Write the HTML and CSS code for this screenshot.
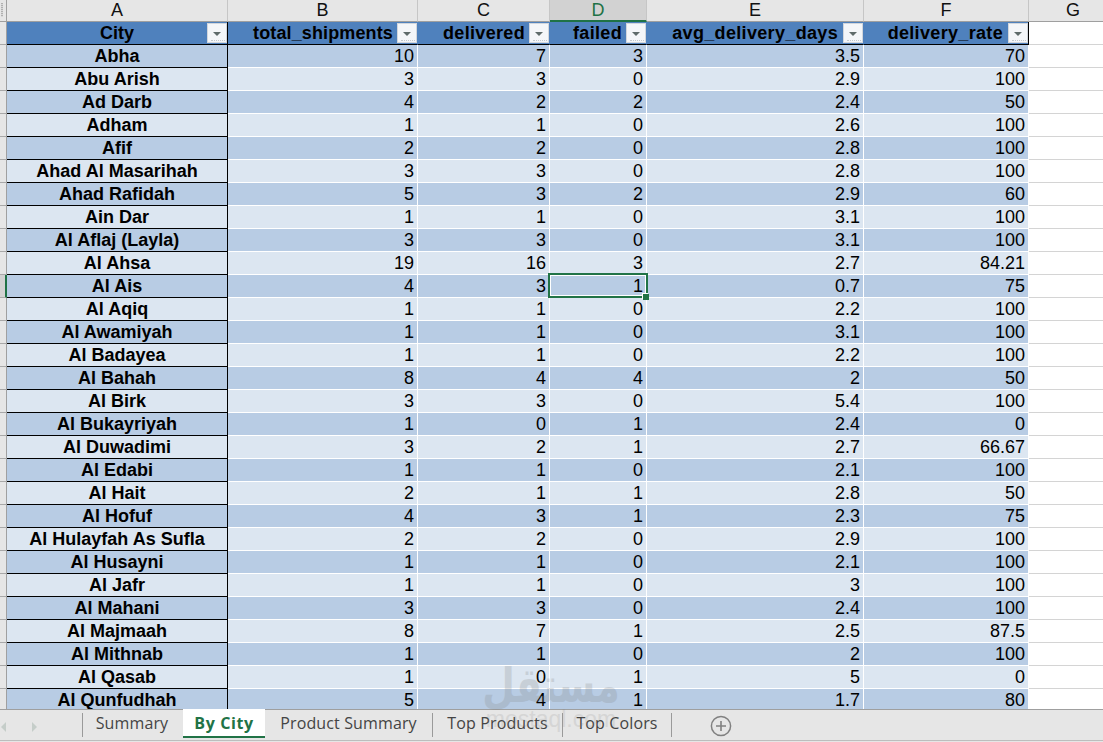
FILE: index.html
```html
<!DOCTYPE html>
<html lang="en">
<head>
<meta charset="utf-8">
<title>By City</title>
<link rel="stylesheet" href="styles.css">
</head>
<body>
<div class="app">
  <div class="sheet">
    <table class="grid">
      <colgroup><col class="w0"><col class="w1"><col class="w2"><col class="w3"><col class="w4"><col class="w5"><col class="w6"><col class="w7"></colgroup>
      <thead>
        <tr class="letters"><th class="corner"></th><th class="colh">A</th><th class="colh">B</th><th class="colh">C</th><th class="colh active">D</th><th class="colh">E</th><th class="colh">F</th><th class="colh">G</th></tr>
        <tr class="heads"><th class="rowh"></th>
          <th class="head cityh">City<span class="fbtn"></span></th>
          <th class="head tight">total_shipments<span class="fbtn"></span></th>
          <th class="head">delivered<span class="fbtn"></span></th>
          <th class="head">failed<span class="fbtn"></span></th>
          <th class="head wide">avg_delivery_days<span class="fbtn"></span></th>
          <th class="head wide end">delivery_rate<span class="fbtn"></span></th>
          <td class="blank"></td></tr>
      </thead>
      <tbody>
        <tr><th class="rowh"></th><td class="city">Abha</td><td>10</td><td>7</td><td>3</td><td>3.5</td><td>70</td><td class="blank"></td></tr>
        <tr><th class="rowh"></th><td class="city">Abu Arish</td><td>3</td><td>3</td><td>0</td><td>2.9</td><td>100</td><td class="blank"></td></tr>
        <tr><th class="rowh"></th><td class="city">Ad Darb</td><td>4</td><td>2</td><td>2</td><td>2.4</td><td>50</td><td class="blank"></td></tr>
        <tr><th class="rowh"></th><td class="city">Adham</td><td>1</td><td>1</td><td>0</td><td>2.6</td><td>100</td><td class="blank"></td></tr>
        <tr><th class="rowh"></th><td class="city">Afif</td><td>2</td><td>2</td><td>0</td><td>2.8</td><td>100</td><td class="blank"></td></tr>
        <tr><th class="rowh"></th><td class="city">Ahad Al Masarihah</td><td>3</td><td>3</td><td>0</td><td>2.8</td><td>100</td><td class="blank"></td></tr>
        <tr><th class="rowh"></th><td class="city">Ahad Rafidah</td><td>5</td><td>3</td><td>2</td><td>2.9</td><td>60</td><td class="blank"></td></tr>
        <tr><th class="rowh"></th><td class="city">Ain Dar</td><td>1</td><td>1</td><td>0</td><td>3.1</td><td>100</td><td class="blank"></td></tr>
        <tr><th class="rowh"></th><td class="city">Al Aflaj (Layla)</td><td>3</td><td>3</td><td>0</td><td>3.1</td><td>100</td><td class="blank"></td></tr>
        <tr><th class="rowh"></th><td class="city">Al Ahsa</td><td>19</td><td>16</td><td>3</td><td>2.7</td><td>84.21</td><td class="blank"></td></tr>
        <tr><th class="rowh active"></th><td class="city">Al Ais</td><td>4</td><td>3</td><td class="sel">1</td><td>0.7</td><td>75</td><td class="blank"></td></tr>
        <tr><th class="rowh"></th><td class="city">Al Aqiq</td><td>1</td><td>1</td><td>0</td><td>2.2</td><td>100</td><td class="blank"></td></tr>
        <tr><th class="rowh"></th><td class="city">Al Awamiyah</td><td>1</td><td>1</td><td>0</td><td>3.1</td><td>100</td><td class="blank"></td></tr>
        <tr><th class="rowh"></th><td class="city">Al Badayea</td><td>1</td><td>1</td><td>0</td><td>2.2</td><td>100</td><td class="blank"></td></tr>
        <tr><th class="rowh"></th><td class="city">Al Bahah</td><td>8</td><td>4</td><td>4</td><td>2</td><td>50</td><td class="blank"></td></tr>
        <tr><th class="rowh"></th><td class="city">Al Birk</td><td>3</td><td>3</td><td>0</td><td>5.4</td><td>100</td><td class="blank"></td></tr>
        <tr><th class="rowh"></th><td class="city">Al Bukayriyah</td><td>1</td><td>0</td><td>1</td><td>2.4</td><td>0</td><td class="blank"></td></tr>
        <tr><th class="rowh"></th><td class="city">Al Duwadimi</td><td>3</td><td>2</td><td>1</td><td>2.7</td><td>66.67</td><td class="blank"></td></tr>
        <tr><th class="rowh"></th><td class="city">Al Edabi</td><td>1</td><td>1</td><td>0</td><td>2.1</td><td>100</td><td class="blank"></td></tr>
        <tr><th class="rowh"></th><td class="city">Al Hait</td><td>2</td><td>1</td><td>1</td><td>2.8</td><td>50</td><td class="blank"></td></tr>
        <tr><th class="rowh"></th><td class="city">Al Hofuf</td><td>4</td><td>3</td><td>1</td><td>2.3</td><td>75</td><td class="blank"></td></tr>
        <tr><th class="rowh"></th><td class="city">Al Hulayfah As Sufla</td><td>2</td><td>2</td><td>0</td><td>2.9</td><td>100</td><td class="blank"></td></tr>
        <tr><th class="rowh"></th><td class="city">Al Husayni</td><td>1</td><td>1</td><td>0</td><td>2.1</td><td>100</td><td class="blank"></td></tr>
        <tr><th class="rowh"></th><td class="city">Al Jafr</td><td>1</td><td>1</td><td>0</td><td>3</td><td>100</td><td class="blank"></td></tr>
        <tr><th class="rowh"></th><td class="city">Al Mahani</td><td>3</td><td>3</td><td>0</td><td>2.4</td><td>100</td><td class="blank"></td></tr>
        <tr><th class="rowh"></th><td class="city">Al Majmaah</td><td>8</td><td>7</td><td>1</td><td>2.5</td><td>87.5</td><td class="blank"></td></tr>
        <tr><th class="rowh"></th><td class="city">Al Mithnab</td><td>1</td><td>1</td><td>0</td><td>2</td><td>100</td><td class="blank"></td></tr>
        <tr><th class="rowh"></th><td class="city">Al Qasab</td><td>1</td><td>0</td><td>1</td><td>5</td><td>0</td><td class="blank"></td></tr>
        <tr><th class="rowh"></th><td class="city">Al Qunfudhah</td><td>5</td><td>4</td><td>1</td><td>1.7</td><td>80</td><td class="blank"></td></tr>
      </tbody>
    </table>
  </div>
  <div class="mark"><div class="mark-ar" dir="rtl">مستقل</div><div class="mark-en">mostaql.com</div></div>
  <div class="tabs">
    <span class="nav"><i class="tri left"></i><i class="tri right"></i></span>
    <span class="tab t1">Summary</span>
    <span class="tab on">By City</span>
    <span class="tab t3">Product Summary</span>
    <span class="tab t4">Top Products</span>
    <span class="tab t5">Top Colors</span>
    <svg class="plus" width="22" height="22" viewBox="0 0 22 22"><circle cx="11" cy="11" r="9.6" fill="none" stroke="#808080" stroke-width="1.5"/><path d="M6 11h10M11 6v10" stroke="#808080" stroke-width="1.6"/></svg>
  </div>
</div>
</body>
</html>
```
FILE: styles.css
```css
* { box-sizing: border-box; }
html, body { margin: 0; height: 100%; overflow: hidden; background: #fff; }
.app { position: relative; width: 1103px; height: 742px; display: flex; flex-direction: column; font-family: "Liberation Sans", Arial, sans-serif; overflow: hidden; }
.sheet { flex: 0 0 709px; overflow: hidden; }

.grid { table-layout: fixed; width: 1118px; border-collapse: separate; border-spacing: 0; font-size: 18px; color: #000; }
.w0 { width: 7px; } .w1 { width: 221px; } .w2 { width: 190px; } .w3 { width: 132px; } .w4 { width: 97px; } .w5 { width: 217px; } .w6 { width: 165px; } .w7 { width: 89px; }
.grid tr { height: 23px; }
.grid .letters { height: 21px; }
.grid th, .grid td { padding: 1px 3px 0 0; height: 23px; line-height: 20px; vertical-align: top; white-space: nowrap; overflow: visible; font-weight: 400; }

.grid .corner, .grid .colh { height: 21px; padding: 0; line-height: 20px; background: #e6e6e6; border-right: 1px solid #c6c6c6; border-bottom: 1px solid #9f9f9f; text-align: center; color: #111; }
.grid .corner { position: relative; border-right-color: #a0a0a0; }
.corner::before { content: ""; position: absolute; left: 1px; top: 3px; width: 2px; height: 14px; background: repeating-linear-gradient(#b0b0b0 0 1px, #d8d8d8 1px 2px); }
.grid .colh.active { background: #d2d2d2; color: #1f7246; border-bottom: 2px solid #1f7246; }
.grid .rowh { padding: 0; background: #e6e6e6; border-right: 1px solid #a0a0a0; border-bottom: 1px solid #a8a8a8; }
.grid .rowh.active { background: #d2d2d2; border-right: 2px solid #1f7246; }

.grid td { position: relative; text-align: right; background: #dce6f1; border-right: 1px solid #fff; border-bottom: 1px solid #fff; }
.grid tbody tr:nth-child(odd) td:not(.blank) { background: #b8cce4; }
.grid td.city { padding-right: 0; text-align: center; font-weight: 700; border-right: 1px solid #000; border-bottom: 1px solid #000; }

.grid th.head { position: relative; background: #4f81bd; font-weight: 700; text-align: right; letter-spacing: .33px; padding-right: 24px; border-right: 1px solid #4f81bd; border-bottom: 1px solid #000; }
.grid th.head.tight { letter-spacing: .13px; }
.grid th.head.wide { padding-right: 25px; }
.grid th.head.cityh { text-align: center; padding-right: 0; letter-spacing: 0; border-right: 1px solid #000; }
.grid th.head.end { border-right: 1px solid #000; }
.grid td.blank { background: #fff; border-right: 0; border-bottom: 1px solid #d4d4d4; }

.fbtn { position: absolute; right: 0; top: 1px; width: 20px; height: 20px; background: #f4f6f9; border: 1px solid #d2d6dc; display: flex; align-items: center; justify-content: center; padding-top: 2px; }
.fbtn::after { content: ""; border-left: 4px solid transparent; border-right: 4px solid transparent; border-top: 4px solid #5f6b6b; }
.fbtn::before { content: ""; position: absolute; left: 3px; right: 1px; bottom: 1px; border-bottom: 1px dotted #c4c8cc; }

.grid td.sel::after { content: ""; position: absolute; top: -2px; left: -2px; right: -2px; bottom: -1px; border: 2px solid #217346; box-shadow: inset 0 0 0 1px #fff; z-index: 2; }
.grid td.sel::before { content: ""; position: absolute; right: -3px; bottom: -3px; width: 6px; height: 6px; background: #217346; box-shadow: -1px -1px 0 #fff; z-index: 3; }

.mark { position: absolute; left: 477px; top: 660px; width: 148px; text-align: center; color: #808080; z-index: 6; pointer-events: none; }
.mark-ar { font-family: "DejaVu Sans", sans-serif; font-weight: 700; font-size: 40px; line-height: 50px; opacity: .22; transform: scale(.94, 1.2); }
.mark-en { margin-top: -1px; font-size: 23px; line-height: 20px; opacity: .16; }

.tabs { flex: 1; position: relative; z-index: 5; display: flex; align-items: flex-start; background: #e6e6e6; border-top: 1px solid #9f9f9f; border-bottom: 1px solid #e6e6e6; box-shadow: inset 0 -1px 0 #bdbdbd; font-family: "Open Sans", "Noto Sans", sans-serif; font-size: 16px; color: #444; letter-spacing: .13px; }
.nav { width: 83px; height: 24px; margin-top: 3px; padding: 3px 0 0 1px; border-right: 1px solid #9a9a9a; display: flex; align-items: center; gap: 26px; }
.tri { display: block; width: 0; height: 0; border-top: 5px solid transparent; border-bottom: 5px solid transparent; }
.tri.left { border-right: 5px solid #c5cdc9; }
.tri.right { border-left: 5px solid #c5cdc9; }
.tab { height: 24px; margin-top: 3px; line-height: 20px; text-align: center; border-right: 1px solid #9a9a9a; white-space: nowrap; }
.t1 { width: 100px; border-right: 0; padding-right: 2px; }
.t3 { width: 168px; }
.t4 { width: 130px; }
.t5 { width: 109px; }
.tab.on { width: 82px; height: 29px; margin-top: -1px; padding-top: 4px; background: #fff; color: #217346; font-weight: 700; letter-spacing: .6px; border-right: 0; border-bottom: 2px solid #217346; }
.plus { margin: 5px 0 0 38px; }
```
